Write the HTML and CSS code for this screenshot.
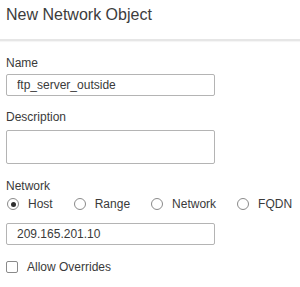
FILE: index.html
```html
<!DOCTYPE html>
<html lang="en">
<head>
    <meta charset="UTF-8">
    <meta name="viewport" content="width=device-width, initial-scale=1.0">
    <title>New Network Object</title>
    <link rel="stylesheet" href="styles.css">
</head>
<body>
    <!-- Dialog header -->
    <div class="dialog-header">
        <h1 class="dialog-title">New Network Object</h1>
    </div>

    <!-- Dialog body -->
    <form class="dialog-body">
        <label class="field-label label-name" for="name">Name</label>
        <input class="text-input" id="name" type="text" value="ftp_server_outside">

        <label class="field-label label-desc" for="desc">Description</label>
        <textarea class="text-area" id="desc"></textarea>

        <div class="field-label label-network">Network</div>
        <div class="radio-row">
            <label class="radio-option"><span class="radio checked"></span>Host</label>
            <label class="radio-option"><span class="radio"></span>Range</label>
            <label class="radio-option"><span class="radio"></span>Network</label>
            <label class="radio-option"><span class="radio"></span>FQDN</label>
        </div>
        <input class="text-input ip-input" type="text" value="209.165.201.10">

        <label class="check-option"><span class="checkbox"></span>Allow Overrides</label>
    </form>
</body>
</html>
```

FILE: styles.css
```css
/* Page */
body {
    margin: 0;
    background-color: #ffffff;
    font-family: 'Liberation Sans', Arial, sans-serif;
    color: #3a3a3a;
}

/* Header with title */
.dialog-header {
    height: 39px;
    display: flex;
    align-items: center;
    padding-left: 6px;
    border-bottom: 2px solid #e6e6e6;
    box-shadow: 0 1px 1px rgba(0, 0, 0, 0.04);
}

.dialog-title {
    margin: 0;
    font-size: 16px;
    font-weight: normal;
    color: #3c3c3c;
    padding-bottom: 10px;
}

/* Form body */
.dialog-body {
    display: flex;
    flex-direction: column;
    align-items: flex-start;
    padding: 0 6px;
}

.field-label {
    font-size: 12px;
    line-height: 16px;
    color: #3a3a3a;
}

.label-name {
    margin-top: 14px;
}

.label-desc {
    margin-top: 13px;
}

.label-network {
    margin-top: 14px;
}

/* Inputs */
.text-input,
.text-area {
    box-sizing: border-box;
    width: 209px;
    margin: 3px 0 0 0;
    padding: 0 0 0 10px;
    border: 1px solid #b4b4b4;
    border-radius: 2px;
    background-color: #ffffff;
    font-family: inherit;
    font-size: 12px;
    color: #3a3a3a;
    outline: none;
}

.text-input {
    height: 22px;
}

.text-area {
    height: 34px;
    margin-top: 5px;
    resize: none;
}

.ip-input {
    margin-top: 11px;
}

/* Radio buttons */
.radio-row {
    display: flex;
    gap: 21px;
    margin-top: 2px;
    height: 16px;
    align-items: center;
}

.radio-option {
    display: flex;
    align-items: center;
    gap: 9px;
    font-size: 12px;
    color: #3a3a3a;
}

.radio-option:first-child {
    margin-left: 1px;
}

.radio {
    box-sizing: border-box;
    width: 12px;
    height: 12px;
    border: 1px solid #8a8a8a;
    border-radius: 50%;
    display: flex;
    align-items: center;
    justify-content: center;
}

.radio.checked::after {
    content: "";
    width: 5px;
    height: 5px;
    border-radius: 50%;
    background-color: #2f2f2f;
}

/* Checkbox */
.check-option {
    display: flex;
    align-items: center;
    gap: 9px;
    margin-top: 15px;
    font-size: 12px;
    color: #3a3a3a;
}

.checkbox {
    box-sizing: border-box;
    width: 12px;
    height: 12px;
    border: 1px solid #8a8a8a;
    border-radius: 2px;
}
```
